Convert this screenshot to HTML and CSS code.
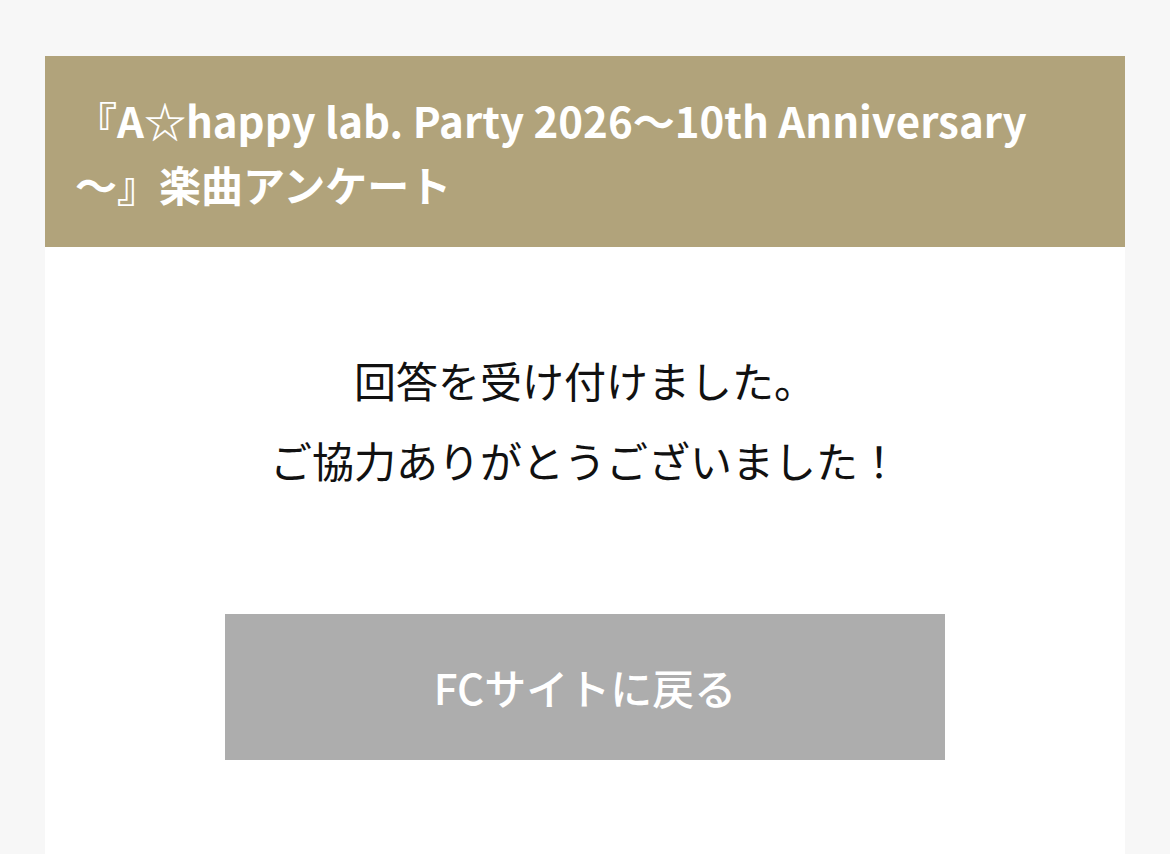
FILE: index.html
```html
<!DOCTYPE html>
<html lang="ja">
<head>
    <meta charset="UTF-8">
    <meta name="viewport" content="width=device-width, initial-scale=1.0">
    <title>楽曲アンケート</title>
    <link rel="stylesheet" href="styles.css">
</head>
<body>
    <div class="card">
        <div class="card-header">
            <h1>『A☆happy lab. Party 2026〜10th Anniversary<wbr>〜』楽曲アンケート</h1>
        </div>
        <div class="card-body">
            <p class="thanks">回答を受け付けました。<br>ご協力ありがとうございました！</p>
            <a class="back-btn" href="#">FCサイトに戻る</a>
        </div>
    </div>
</body>
</html>
```

FILE: styles.css
```css
body {
    margin: 0;
    background-color: #f7f7f7;
    font-family: "Noto Sans CJK JP", "Noto Sans", sans-serif;
}
.card {
    margin: 56px 45px 0;
    background-color: #fff;
    min-height: 798px;
}
.card-header {
    background-color: #b1a37b;
    padding: 32px 40px 31px 30px;
}
.card-header h1 {
    margin: 0;
    color: #fff;
    font-size: 42px;
    line-height: 64px;
    font-weight: bold;
    line-break: loose;
}
.card-body {
    padding-top: 93px;
    text-align: center;
}
.thanks {
    margin: 0;
    font-size: 42px;
    line-height: 80px;
    color: #111;
}
.back-btn {
    display: block;
    width: 720px;
    height: 146px;
    line-height: 146px;
    margin: 114px auto 0;
    background-color: #adadad;
    color: #fff;
    font-size: 42px;
    font-weight: 500;
    text-decoration: none;
}
```
